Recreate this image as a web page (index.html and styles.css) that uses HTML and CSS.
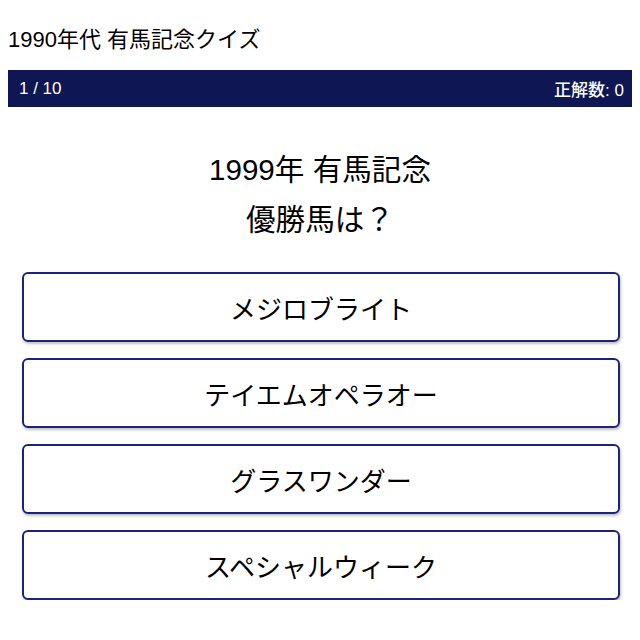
FILE: index.html
```html
<!DOCTYPE html>
<html lang="ja">
<head>
<meta charset="utf-8">
<link rel="stylesheet" href="styles.css">
</head>
<body>
<div class="title">1990年代 有馬記念クイズ</div>
<div class="status">
  <span>1 / 10</span>
  <span>正解数: 0</span>
</div>
<div class="question">1999年 有馬記念<br>優勝馬は？</div>
<div class="choices">
  <button class="choice">メジロブライト</button>
  <button class="choice">テイエムオペラオー</button>
  <button class="choice">グラスワンダー</button>
  <button class="choice">スペシャルウィーク</button>
</div>
</body>
</html>
```
FILE: styles.css
```css
body {
  margin: 8px;
  font-family: "Liberation Sans", Arial, "Noto Sans CJK JP", sans-serif;
  color: #000;
  background: #fff;
}
.title {
  font-size: 22px;
  line-height: 30px;
  padding-top: 17px;
  margin-bottom: 15px;
}
.status {
  display: flex;
  justify-content: space-between;
  align-items: center;
  background: #0e1654;
  color: #fff;
  height: 37px;
  padding: 0 8px 0 11px;
  font-size: 17px;
  font-weight: 500;
}
.question {
  text-align: center;
  font-size: 29.6px;
  line-height: 50px;
  margin-top: 38px;
}
.choices {
  display: flex;
  flex-direction: column;
  gap: 16px;
  padding: 0 12px 0 14px;
  margin-top: 27px;
}
.choice {
  height: 70px;
  background: #fff;
  border: 2px solid #1a237e;
  border-radius: 6px;
  box-shadow: 1px 2px 3px rgba(0,0,0,0.25);
  font-family: inherit;
  font-size: 26px;
  color: #000;
}
```
